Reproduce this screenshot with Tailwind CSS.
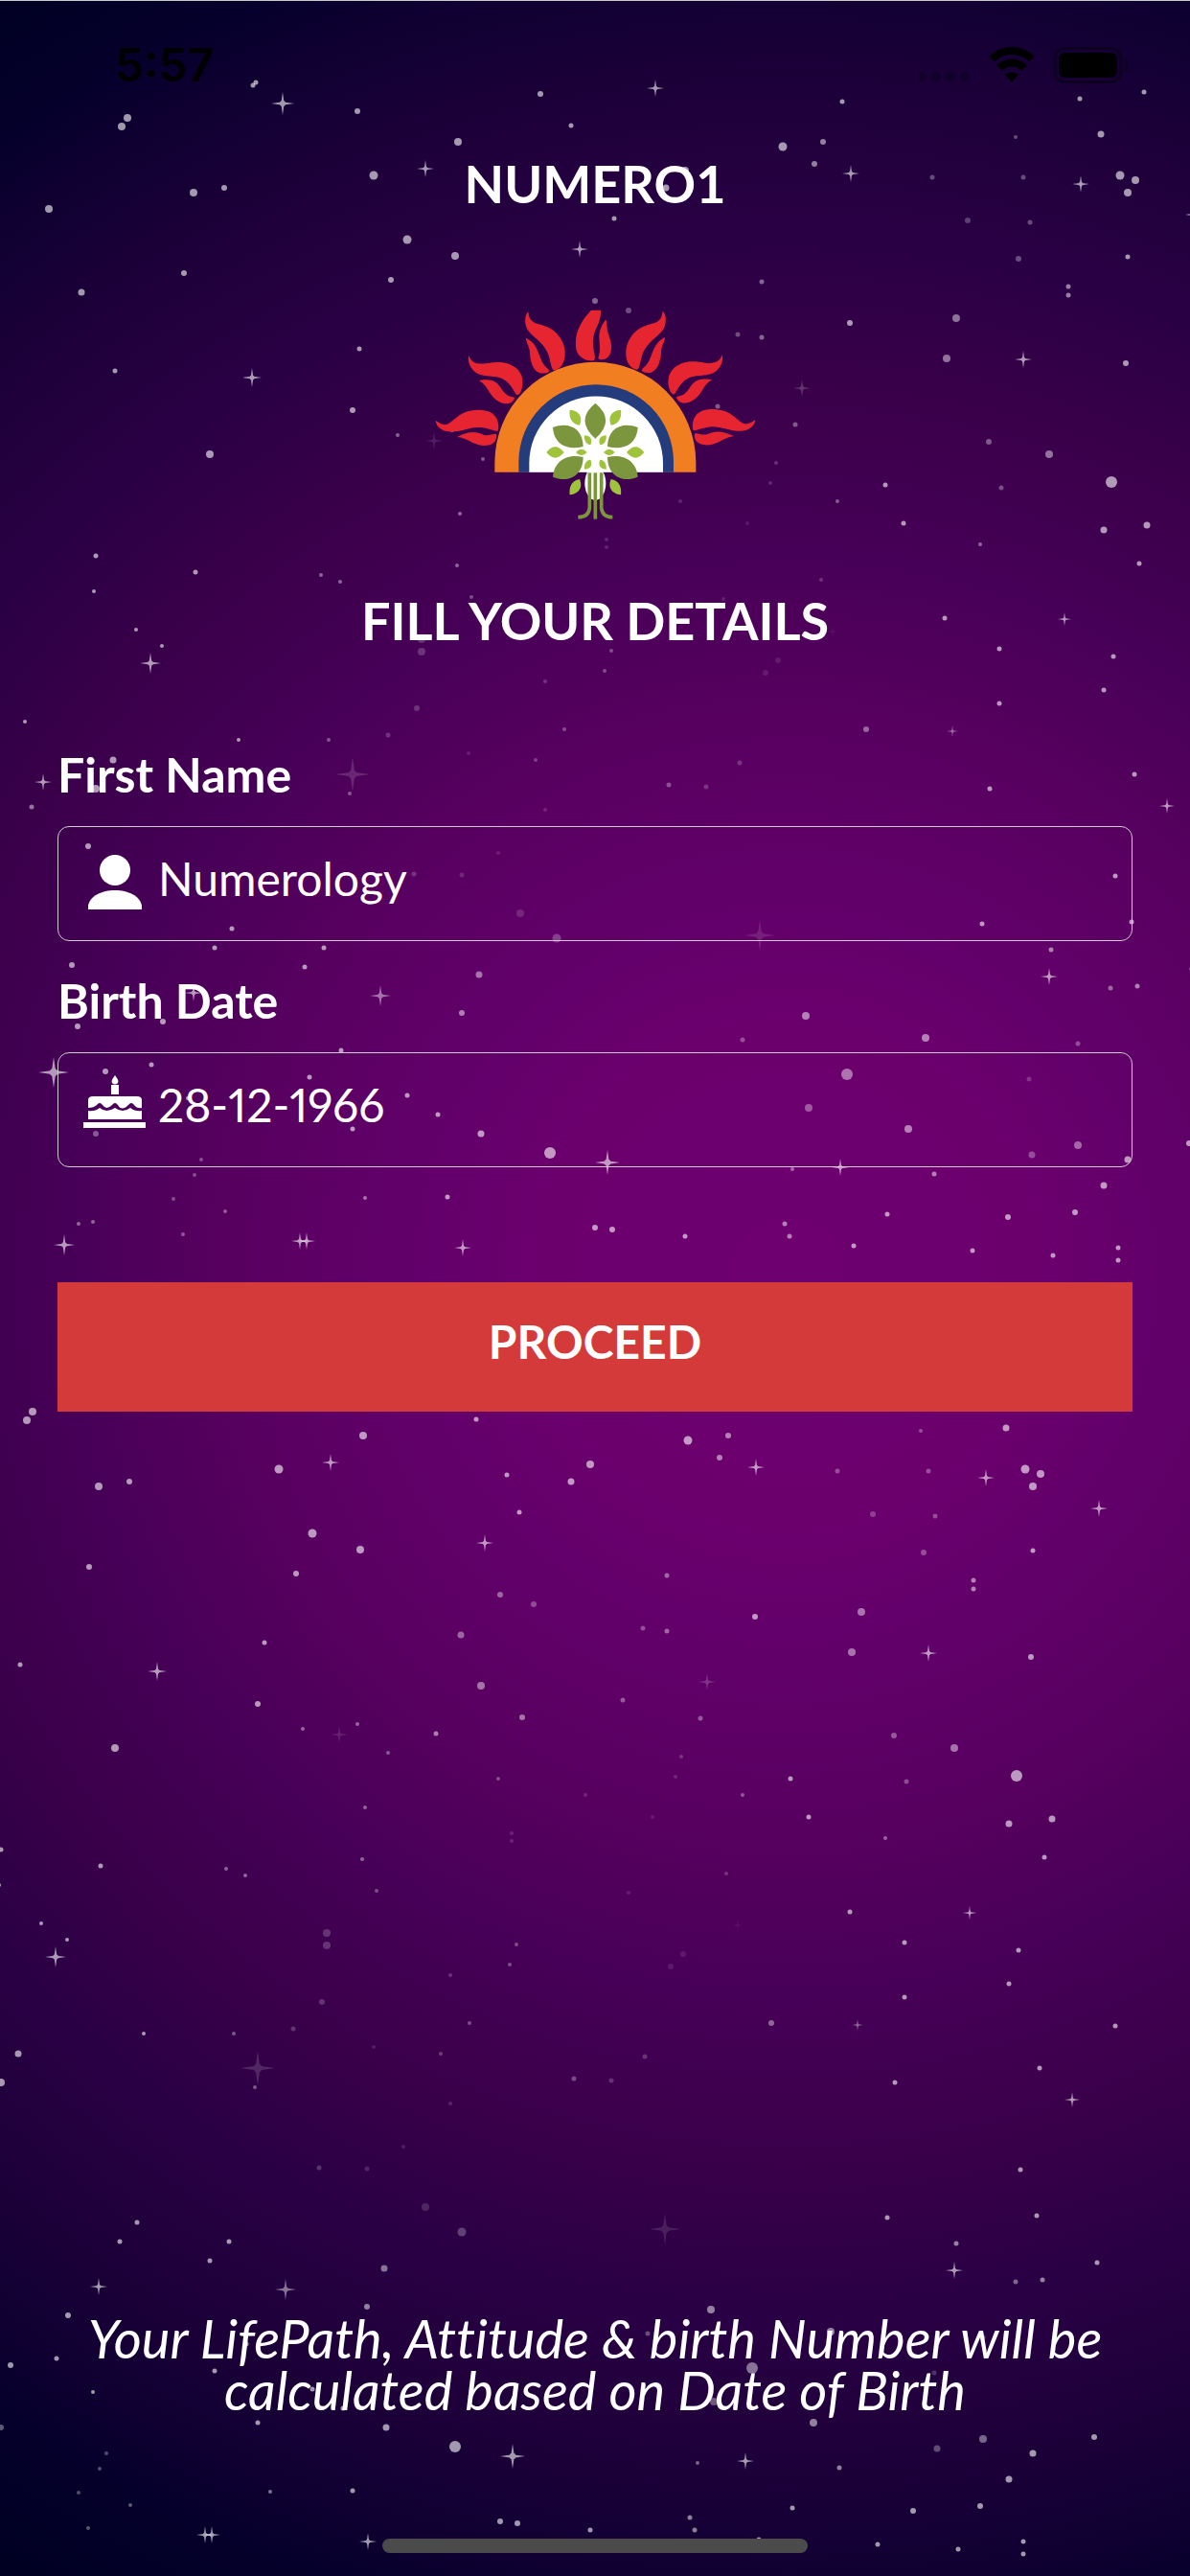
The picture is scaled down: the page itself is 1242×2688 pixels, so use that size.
<!DOCTYPE html>
<html lang="en">
<head>
  <meta charset="UTF-8" />
  <meta name="viewport" content="width=device-width, initial-scale=1" />
  <title>Numero1</title>
  <script src="https://cdn.jsdelivr.net/npm/@tailwindcss/browser@4"></script>
</head>
<body class="bg-[#000022]">

  <div class="relative isolate flex min-h-screen flex-col overflow-hidden border-t border-[#c9cbc9] bg-[radial-gradient(circle_at_820px_1330px,#6e006f_0px,#6b006d_260px,#62006a_400px,#56005f_600px,#470057_750px,#3a004a_920px,#2a0045_1080px,#1f003a_1220px,#120033_1340px,#05002b_1440px,#000022_1580px)] font-[Lato,sans-serif] text-white">

    <!-- Starry sky -->
    <svg class="absolute inset-0 -z-10 h-full w-full" aria-hidden="true">
      <g id="sky" fill="#fff"></g>
      <use href="#sky" x="-99" y="1350" />
    </svg>

    <!-- Status bar -->
    <div class="flex h-[133px] items-center justify-between pr-16 pl-30 text-black">
      <span class="font-[Inter,sans-serif] text-[48px] leading-[48px] font-semibold">5:57</span>
      <svg class="h-10 w-[222px]" viewBox="0 0 222 40" aria-hidden="true">
        <g fill="#10002a">
          <circle cx="6" cy="32" r="5" />
          <circle cx="21" cy="32" r="5" />
          <circle cx="36" cy="32" r="5" />
          <circle cx="51" cy="32" r="5" />
        </g>
        <g fill="none" stroke="#000" stroke-width="8">
          <path d="M79 13.500a30 30 0 0 1 42 0" />
          <path d="M87 23a18 18 0 0 1 26 0" />
        </g>
        <path d="M100 38l-7-8a10 10 0 0 1 14 0z" />
        <rect x="145" y="2.500" width="69" height="35" rx="10" fill="none" stroke="#0d0020" stroke-width="3" />
        <rect x="149" y="7" width="61" height="26" rx="6" />
        <path d="M218 13q4 2 4 7t-4 7z" fill="#0d0020" />
      </svg>
    </div>

    <main class="flex flex-1 flex-col px-15">
      <h1 class="mt-6 text-center text-[54px] leading-[68px] font-bold">NUMERO1</h1>

      <!-- Logo: sun rays, arches and tree -->
      <svg class="mx-auto mt-24 h-[224px] w-[340px]" viewBox="60 66 1020 672" role="img" aria-label="Numero1 logo">
        <defs>
          <g id="ray">
            <path d="M558 71H588C589 120 562 128 564 178C564 195 574 220 568 227C562 232 545 228 536 224C512 213 508 190 510 165C512 130 532 98 558 71Z" />
            <path d="M603 101C610 105 604 122 612 145C618 165 622 175 621 190C620 215 608 225 592 226C584 227 578 224 581 217C590 190 582 170 583 150C585 128 594 113 603 101Z" />
          </g>
          <g id="sideRays">
            <path d="M782 74C792 82 795 105 787 125C775 150 745 160 725 195C712 218 714 240 705 255C700 261 685 252 678 243C665 225 663 195 674 170C700 115 745 118 765 107C778 98 780 88 782 74Z" />
            <path d="M789 156C790 168 776 185 777 205C775 235 765 260 745 266C735 268 720 266 717 261C714 254 730 248 738 232C750 205 752 192 764 176C772 166 782 159 789 156Z" />
            <path d="M968 211C974 225 965 255 940 268C910 282 880 268 850 292C832 308 826 325 819 334C812 336 806 328 803 318C795 290 800 268 820 250C850 228 880 230 915 236C950 240 962 228 968 211Z" />
            <path d="M936 289C925 297 920 300 910 315C895 342 875 362 848 362C836 361 828 354 825 345C825 338 840 342 850 333C868 318 870 300 890 291C905 285 925 286 936 289Z" />
            <path d="M1072 415C1070 438 1045 452 1015 449C980 447 960 432 925 437C900 440 888 449 878 447C873 440 875 422 880 410C890 388 912 381 940 381C1000 383 1010 415 1038 427C1055 428 1062 420 1072 415Z" />
            <path d="M1005 466C990 466 975 474 960 482C935 496 905 497 890 484C882 475 880 466 882 457C890 454 905 463 920 460C945 448 970 447 1005 466Z" />
          </g>
          <g id="branch">
            <path d="M704 438C700 495 655 510 609 498C610 440 655 420 704 438Z" fill="#7b963c" />
            <path d="M651 383C655 413 640 428 620 431C609 405 622 385 651 383Z" fill="#9fc43b" />
            <path d="M605 463C607 482 598 492 586 493C578 475 588 463 605 463Z" fill="#9fc43b" />
            <path d="M669 516Q697 482 724 516Q697 550 669 516Z" fill="#9fc43b" />
            <path d="M597 516Q615 496 632 516Q615 536 597 516Z" fill="#9fc43b" />
          </g>
          <g id="lowerLeaves">
            <path d="M704 593C700 540 655 520 609 531C610 590 655 613 704 593Z" fill="#7b963c" />
            <path d="M651 649C655 619 640 603 620 600C609 625 622 646 651 649Z" fill="#9fc43b" />
            <path d="M605 569C607 550 598 540 586 539C578 557 588 569 605 569Z" fill="#9fc43b" />
          </g>
        </defs>
        <g fill="#e62530">
          <use href="#ray" />
          <use href="#sideRays" />
          <use href="#sideRays" transform="matrix(-1 0 0 1 1143 2)" />
        </g>
        <path d="M256 578V548A315 315 0 0 1 886 548V578Z" fill="#f27e22" />
        <path d="M331 578V546A242 242 0 0 1 816 546V578Z" fill="#243b7c" />
        <path d="M364 578V550A209 209 0 0 1 783 550V578Z" fill="#fff" />
        <ellipse cx="571" cy="613" rx="33" ry="53" fill="#fff" />
        <path d="M571 362Q636 415 571 473Q506 415 571 362Z" fill="#7b963c" />
        <use href="#branch" />
        <use href="#branch" transform="matrix(-1 0 0 1 1142 0)" />
        <use href="#lowerLeaves" />
        <use href="#lowerLeaves" transform="matrix(-1 0 0 1 1142 0)" />
        <g fill="none" stroke="#7b963c" stroke-width="11">
          <path d="M553 580V690Q550 719 517 719" />
          <path d="M571 580V725" />
          <path d="M590 580V690Q593 719 625 719" />
        </g>
      </svg>

      <h2 class="mt-[68px] text-center text-[54px] leading-[68px] font-bold">FILL YOUR DETAILS</h2>

      <form onsubmit="return false">
        <label for="firstName" class="mt-24 block text-[50px] leading-[60px] font-bold">First Name</label>
        <div class="mt-6 flex h-30 items-center gap-3 rounded-[12px] border border-[#cfcbcf] pl-[26px]">
          <svg class="h-[66px] w-[66px] shrink-0" viewBox="0 0 66 66" fill="#fff" aria-hidden="true">
            <circle cx="33" cy="19" r="16" />
            <path d="M5 60V56C7 46 19 40 33 40S59 46 61 56V60Z" />
          </svg>
          <input id="firstName" type="text" value="Numerology" class="h-full w-full min-w-0 bg-transparent pb-3 text-[48px] font-normal outline-none" />
        </div>

        <label for="birthDate" class="mt-8 block text-[50px] leading-[60px] font-bold">Birth Date</label>
        <div class="mt-6 flex h-30 items-center gap-3 rounded-[12px] border border-[#cfcbcf] pl-[26px]">
          <svg class="h-[66px] w-[66px] shrink-0 overflow-visible" viewBox="0 3 66 66" fill="#fff" aria-hidden="true">
            <path d="M33 0C36 4 37 6 36 8Q33 11 30 8C29 6 30 4 33 0ZM29 10h8v10h-8z" />
            <path d="M5 34V26Q5 22 10 22H56Q61 22 61 26V34Q56 35 53 31Q50 27 47 31Q40 38 36 31Q33 27 30 31Q24 37 20 31Q17 27 14 31Q11 34 5 34Z" />
            <path d="M5 46V37Q12 38 17 34Q24 40 33 34Q41 40 49 34Q54 38 61 37V46ZM0 49H65V55H0Z" />
          </svg>
          <input id="birthDate" type="text" inputmode="numeric" value="28-12-1966" class="h-full w-full min-w-0 bg-transparent pb-3 text-[48px] font-normal proportional-nums outline-none" />
        </div>

        <button type="submit" class="mt-30 block h-[135px] w-full bg-[#d43a3a] pb-3 text-[48px] font-bold">PROCEED</button>
      </form>

      <p class="mt-auto text-center text-[56px] leading-[54px] italic [font-variant-ligatures:none]">Your LifePath, Attitude &amp; birth Number will be<br />calculated based on Date of Birth</p>
    </main>

    <!-- Home indicator -->
    <div class="mx-auto mt-32 mb-6 h-[15px] w-[444px] rounded-full bg-[#4b4b4b]"></div>
  </div>

  <script>
    // x, y, radius, opacity
    const dots = [
      [133,122,4],[127,131,4],[267,85,2.5],[264,88,2.5],[373,115,3],[564,97,3],[596,130,2.5],[478,147,4],[390,182,4.5],
      [202,200,4],[234,195,3],[51,217,4],[425,249,4.5],[475,266,4],[408,291,3],[192,284,3],[85,304,3.5],[375,363,2.5],
      [120,386,2.5],[368,427,3],[621,313,3,.4],[580,355,3.5,.4],[879,105,2.5],[817,152,4.5],[859,147,3,.5],[850,170,3,.5],
      [1127,102,2.5],[1194,95,2.5],[1149,139,3.5],[1060,142,2,.3],[973,184,2.5,.3],[1068,184,2.5,.3],[1169,182,4.5],
      [1185,187,4],[1177,200,4],[1010,229,3,.25],[1075,231,2.5,.3],[1063,269,3,.3],[1177,267,2.5],[641,227,2.5],
      [795,293,2.5,.4],[1115,298,2.5,.5],[1115,307,2.5,.5],[998,331,4,.45],[887,336,3],[656,323,3,.3],[770,348,2.5,.3],
      [795,351,2.5,.4],[988,373,4,.45],[1175,378,3],[749,423,2.5,.35],[830,442,2.5,.35],[628,188,2.5],[695,195,3.5],
      [715,177,4],[219,473,4],[415,453,2,.4],[472,448,2,.4],[554,458,2.5,.5],[504,478,2,.35],[619,505,2,.3],[710,522,2,.15],
      [601,408,4,.45],[644,441,3,.45],[810,482,2,.2],[804,503,2,.15],[874,522,2,.35],[924,505,2.5],[1032,460,3,.35],
      [1045,508,2.5,.3],[1095,473,4,.45],[1160,502,6],[100,579,2.5],[204,596,2.5],[335,599,2,.4],[355,606,2,.4],
      [480,535,2,.4],[477,589,2,.4],[492,622,2,.3],[633,562,2,.15],[633,570,2,.15],[142,656,2],[169,673,2],[98,616,2],
      [440,666,4,.2],[440,679,4,.2],[435,738,3,.2],[405,766,2.5,.2],[343,771,2,.35],[249,771,2],[638,678,2,.3],
      [631,699,2,.3],[569,710,2,.2],[589,760,2,.3],[489,785,2,.12],[559,792,2,.25],[698,818,2.5,.3],[569,844,2,.15],
      [520,889,2,.12],[118,792,3.5],[100,822,4],[365,827,2,.35],[432,911,2.5,.2],[482,912,2.5,.15],[543,952,4,.15],
      [581,978,4.5,.25],[500,1016,3.5,.45],[242,968,2.5],[224,988,2.5],[338,988,2.5],[318,1008,2.5],[170,1065,3],
      [482,1056,3,.5],[110,1117,3],[158,1110,2.5],[356,1095,2.5],[323,1123,2.5],[425,1142,2.5],[457,1162,2.5],
      [196,1145,2],[368,1177,2.5],[502,1182,3.5],[574,1202,6],[100,1182,3,.35],[81,1070,3],[75,1006,3],[210,1209,2,.3],
      [203,1225,2,.3],[181,1250,2,.3],[235,1263,2,.35],[191,1287,2,.35],[381,1249,2,.45],[467,1248,2.5],[621,1280,3],
      [639,1282,3],[715,1289,2.5],[26,752,2],[33,841,2.5,.45],[92,882,3],[82,1276,2,.4],[97,1274,2,.4],[780,545,2,.1],
      [943,545,2.5],[1023,567,2,.4],[1152,552,3.5],[1197,547,3.5],[1189,587,2.5],[857,604,2,.2],[755,624,2,.12],
      [986,644,2.5],[1043,676,2.5],[1162,684,2.5],[1152,719,2.5],[1043,733,2.5],[812,688,3,.1],[799,701,3,.1],
      [904,760,3,.4],[1263,763,2.5],[772,795,2.5,.2],[737,820,2.5,.2],[1033,822,2.5],[1184,807,2.5],[1164,913,2.5],
      [1025,963,2.5],[1181,961,2.5],[1097,990,2.5,.5],[1159,1030,2.5,.4],[1187,1028,2.5,.5],[1244,1010,2.5],
      [841,1059,4,.5],[966,1082,4,.5],[1125,1088,2.5,.3],[884,1120,6,.45],[1074,1125,2.5,.2],[775,1084,2.5,.3],
      [844,1155,4,.35],[948,1177,4,.5],[1077,1204,3.5,.3],[1125,1194,4,.4],[1177,1209,3.5],[1152,1236,3.5],
      [1241,1192,3],[827,1219,2,.4],[975,1224,2.5,.5],[926,1266,2.5],[819,1276,2.5,.5],[824,1289,2.5,.5],[1052,1269,3],
      [1122,1264,3],[891,1299,2.5],[1015,1304,2.5],[1099,1309,2.5],[1167,1301,2.5],[1167,1314,2.5]
    ];

    // x, y, arm length, opacity
    const sparkles = [
      [295,107,12],[444,175,9],[605,259,9],[263,393,10],[684,91,9],[888,180,9],[1128,191,9],[1068,374,9],
      [837,404,9,.2],[1246,223,9],[453,459,9,.12],[157,691,11],[368,807,18,.15],[202,1035,9],[397,1038,11,.45],
      [634,1212,13],[313,1294,9],[320,1294,9],[483,1301,9],[45,815,9],[56,1118,16],[67,1298,11],[1111,645,7],
      [994,762,6,.4],[1218,840,8],[793,975,16,.12],[1095,1018,9],[877,1217,9],[869,658,6,.06]
    ];

    const sky = document.getElementById('sky');

    dots.forEach(([x, y, r, opacity = 0.6]) => {
      sky.insertAdjacentHTML('beforeend', `<circle cx="${x}" cy="${y}" r="${r}" opacity="${opacity}" />`);
    });

    sparkles.forEach(([x, y, s, opacity = 0.6]) => {
      const c = s / 8;
      sky.insertAdjacentHTML('beforeend', `
        <g opacity="${opacity}">
          <path d="M${x} ${y - s}L${x + c} ${y - c}L${x + s} ${y}L${x + c} ${y + c}L${x} ${y + s}L${x - c} ${y + c}L${x - s} ${y}L${x - c} ${y - c}Z" />
          <circle cx="${x}" cy="${y}" r="${s / 4}" />
        </g>
      `);
    });
  </script>
</body>
</html>
